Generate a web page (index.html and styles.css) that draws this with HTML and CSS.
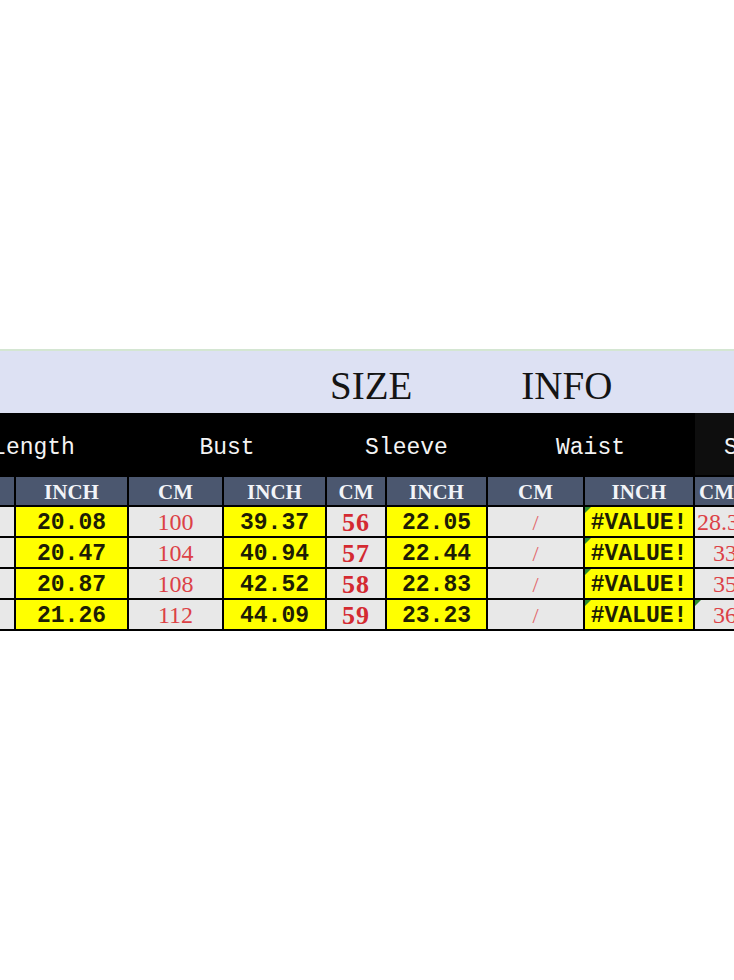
FILE: index.html
```html
<!DOCTYPE html>
<html>
<head>
<meta charset="utf-8">
<link rel="stylesheet" href="styles.css">
</head>
<body>
<div class="sheet">
  <div class="banner"><span>SIZE</span><span>INFO</span></div>
  <div class="grid">
    <div class="hd span2">Length</div>
    <div class="hd span2">Bust</div>
    <div class="hd span2">Sleeve</div>
    <div class="hd span2">Waist</div>
    <div class="hd last">Shoulder</div>

    <div class="sub">CM</div>
    <div class="sub">INCH</div>
    <div class="sub">CM</div>
    <div class="sub">INCH</div>
    <div class="sub">CM</div>
    <div class="sub">INCH</div>
    <div class="sub">CM</div>
    <div class="sub">INCH</div>
    <div class="sub edge">CM</div>

    <div class="g cm">51</div>
    <div class="y in">20.08</div>
    <div class="g cm">100</div>
    <div class="y in">39.37</div>
    <div class="g cmb">56</div>
    <div class="y in">22.05</div>
    <div class="g slash">/</div>
    <div class="y in err">#VALUE!</div>
    <div class="g cm left">28.35433</div>

    <div class="g cm">52</div>
    <div class="y in">20.47</div>
    <div class="g cm">104</div>
    <div class="y in">40.94</div>
    <div class="g cmb">57</div>
    <div class="y in">22.44</div>
    <div class="g slash">/</div>
    <div class="y in err">#VALUE!</div>
    <div class="g cm inset">33.86</div>

    <div class="g cm">53</div>
    <div class="y in">20.87</div>
    <div class="g cm">108</div>
    <div class="y in">42.52</div>
    <div class="g cmb">58</div>
    <div class="y in">22.83</div>
    <div class="g slash">/</div>
    <div class="y in err">#VALUE!</div>
    <div class="g cm inset">35.43</div>

    <div class="g cm">54</div>
    <div class="y in">21.26</div>
    <div class="g cm">112</div>
    <div class="y in">44.09</div>
    <div class="g cmb">59</div>
    <div class="y in">23.23</div>
    <div class="g slash">/</div>
    <div class="y in err">#VALUE!</div>
    <div class="g cm inset err">36.61</div>
  </div>
</div>
</body>
</html>
```

FILE: styles.css
```css
html, body {
  margin: 0;
  padding: 0;
  background: #ffffff;
  overflow: hidden;
}

.sheet {
  margin-top: 349px;
  width: 734px;
}

.banner {
  height: 62px;
  border-top: 2px solid #d4e6d2;
  background: #dde1f3;
  display: flex;
  align-items: center;
  padding-left: 330px;
  gap: 109px;
  font-family: "Liberation Serif", serif;
  font-size: 39px;
  color: #141414;
  line-height: 1;
  box-sizing: content-box;
}

.banner span {
  padding-top: 6px;
}

.grid {
  display: grid;
  margin-left: -60px;
  width: 960px;
  grid-template-columns: 74px 111px 93px 101px 58px 99px 95px 108px 105px;
  grid-template-rows: 62px 28px 29px 29px 29px 29px;
  gap: 2px;
  padding-bottom: 2px;
  background: #000000;
}

.grid > div {
  display: flex;
  align-items: center;
  justify-content: center;
  white-space: nowrap;
  overflow: hidden;
  position: relative;
}

.hd {
  background: #000000;
  color: #f4f4f4;
  font-family: "Liberation Mono", monospace;
  font-size: 23px;
  padding-top: 8px;
}

.span2 {
  grid-column: span 2;
}

.grid > .hd.last {
  background: #0e0e0e;
  justify-content: flex-start;
  padding-left: 29px;
}

.sub {
  background: #4b576f;
  color: #f2f4f8;
  font-family: "Liberation Serif", serif;
  font-weight: bold;
  font-size: 21px;
  padding-top: 3px;
}

.grid > .sub.edge {
  justify-content: flex-start;
  padding-left: 4px;
}

.g {
  background: #e8e8e8;
}

.y {
  background: #ffff00;
}

.in {
  font-family: "Liberation Mono", monospace;
  font-weight: bold;
  font-size: 23px;
  color: #1d1d05;
  padding-top: 3px;
}

.cm {
  font-family: "Liberation Serif", serif;
  font-size: 24px;
  color: #dc4146;
  padding-top: 2px;
}

.cmb {
  font-family: "Liberation Serif", serif;
  font-weight: bold;
  font-size: 26px;
  letter-spacing: 1px;
  color: #d42a31;
  padding-top: 2px;
}

.slash {
  font-family: "Liberation Serif", serif;
  font-size: 22px;
  color: #e2676b;
  padding-top: 2px;
}

.grid > .left {
  justify-content: flex-start;
  padding-left: 2px;
}

.grid > .inset {
  justify-content: flex-start;
  padding-left: 18px;
}

.err::before {
  content: "";
  position: absolute;
  left: 0;
  top: 0;
  width: 0;
  height: 0;
  border-top: 6px solid #2e8b2e;
  border-right: 6px solid transparent;
}
```
